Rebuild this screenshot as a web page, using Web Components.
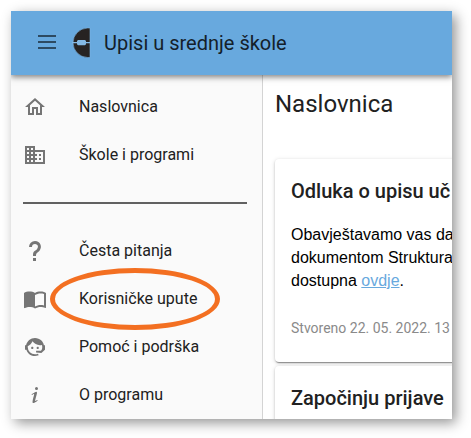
<!DOCTYPE html>
<html lang="hr">
<head>
<meta charset="utf-8">
<meta name="viewport" content="width=device-width, initial-scale=1">
<title>Upisi u srednje škole</title>
<style>
  body {
    margin: 0;
    background: #fff;
    font-family: Roboto, "Liberation Sans", sans-serif;
    color: #212121;
  }
</style>
</head>
<body>
<app-shell>
  <app-toolbar slot="toolbar">Upisi u srednje škole</app-toolbar>
  <side-nav slot="nav">
    <nav-item icon="home">Naslovnica</nav-item>
    <nav-item icon="domain">Škole i programi</nav-item>
    <nav-divider></nav-divider>
    <nav-item icon="help">Česta pitanja</nav-item>
    <nav-item icon="book" marked>Korisničke upute</nav-item>
    <nav-item icon="agent">Pomoć i podrška</nav-item>
    <nav-item icon="info">O programu</nav-item>
  </side-nav>
  <page-heading>Naslovnica</page-heading>
  <news-card>
    <span slot="title">Odluka o upisu uč</span>
    Obavještavamo vas da<br>
    dokumentom Struktura<br>
    dostupna <text-link href="#odluka">ovdje</text-link>.
    <span slot="meta">Stvoreno 22. 05. 2022. 13</span>
  </news-card>
  <news-card>
    <span slot="title">Započinju prijave</span>
  </news-card>
</app-shell>

<script>
const ICONS = {
  menu: "M3 18h18v-2H3v2zm0-6h18v-2H3v2zm0-8v2h18V4H3z",
  home: "M12 5.69L17 10.19V18H15V12H9V18H7V10.19L12 5.69M12 3L2 12H5V20H11V14H13V20H19V12H22L12 3Z",
  domain: "M12 7V3H2v18h20V7H12zM6 19H4v-2h2v2zm0-4H4v-2h2v2zm0-4H4V9h2v2zm0-4H4V5h2v2zm4 12H8v-2h2v2zm0-4H8v-2h2v2zm0-4H8V9h2v2zm0-4H8V5h2v2zm10 12h-8v-2h2v-2h-2v-2h2v-2h-2V9h8v10zm-2-8h-2v2h2v-2zm0 4h-2v2h2v-2z",
  help: "M10,19H13V22H10V19M12,2C17.35,2.22 19.68,7.62 16.5,11.67C15.67,12.67 14.33,13.33 13.67,14.17C13,15 13,16 13,17H10C10,15.33 10,13.92 10.67,12.92C11.33,11.92 12.67,11.33 13.5,10.67C15.92,8.43 15.32,5.26 12,5A3,3 0 0,0 9,8H6A6,6 0 0,1 12,2Z",
  book: "M21 5c-1.11-.35-2.33-.5-3.5-.5-1.95 0-4.05.4-5.5 1.5-1.45-1.1-3.55-1.5-5.5-1.5S2.45 4.9 1 6v14.65c0 .25.25.5.5.5.1 0 .15-.05.25-.05C3.1 20.45 5.05 20 6.5 20c1.95 0 4.05.4 5.5 1.5 1.35-.85 3.8-1.5 5.5-1.5 1.65 0 3.35.3 4.75 1.05.1.05.15.05.25.05.25 0 .5-.25.5-.5V6c-.6-.45-1.25-.75-2-1zm0 13.5c-1.1-.35-2.3-.5-3.5-.5-1.7 0-4.15.65-5.5 1.5V8c1.35-.85 3.8-1.5 5.5-1.5 1.2 0 2.4.15 3.5.5v11.5z",
  agent: "M18.72,14.76C19.07,13.91 19.26,13 19.26,12C19.26,11.28 19.15,10.59 18.96,9.95C18.31,10.1 17.63,10.18 16.92,10.18C13.86,10.18 11.15,8.67 9.5,6.34C8.61,8.5 6.91,10.26 4.77,11.22C4.73,11.47 4.73,11.74 4.73,12A7.27,7.27 0 0,0 12,19.27C13.05,19.27 14.06,19.04 14.97,18.63C15.54,19.72 15.8,20.26 15.78,20.26C14.14,20.81 12.87,21.08 12,21.08C9.58,21.08 7.27,20.13 5.57,18.42C4.53,17.38 3.76,16.11 3.33,14.73H2V10.18H3.09C3.93,6.04 7.6,2.92 12,2.92C14.4,2.92 16.71,3.87 18.42,5.58C19.69,6.84 20.54,8.45 20.89,10.18H22V14.73H21.94L18.38,18L13.08,17.4V15.73H17.91L18.72,14.76M9.27,11.77C9.57,11.77 9.86,11.89 10.07,12.11C10.28,12.32 10.4,12.61 10.4,12.91C10.4,13.21 10.28,13.5 10.07,13.71C9.86,13.92 9.57,14.04 9.27,14.04C8.64,14.04 8.13,13.54 8.13,12.91C8.13,12.28 8.64,11.77 9.27,11.77M14.72,11.77C15.35,11.77 15.85,12.28 15.85,12.91C15.85,13.54 15.35,14.04 14.72,14.04C14.09,14.04 13.58,13.54 13.58,12.91A1.14,1.14 0 0,1 14.72,11.77Z",
  info: "M13.5,4A1.5,1.5 0 0,0 12,5.5A1.5,1.5 0 0,0 13.5,7A1.5,1.5 0 0,0 15,5.5A1.5,1.5 0 0,0 13.5,4M13.14,8.77C11.95,8.87 8.7,11.46 8.7,11.46C8.5,11.61 8.56,11.6 8.72,11.88C8.88,12.15 8.86,12.17 9.05,12.04C9.25,11.91 9.58,11.7 10.13,11.36C12.25,10 10.47,13.14 9.56,18.43C9.2,21.05 11.56,19.7 12.17,19.3C12.77,18.91 14.38,17.8 14.54,17.69C14.76,17.54 14.6,17.42 14.43,17.17C14.31,17 14.19,17.12 14.19,17.12C13.54,17.55 12.35,18.45 12.19,17.88C12,17.31 13.22,13.4 13.89,10.71C14,10.07 14.3,8.67 13.14,8.77Z"
};

class BaseElement extends HTMLElement {
  constructor() {
    super();
    this.attachShadow({ mode: "open" });
  }

  connectedCallback() {
    this.shadowRoot.innerHTML = `<style>${this.constructor.styles}</style>${this.template()}`;
  }
}

class AppShell extends BaseElement {
  static get styles() {
    return /* css */`
      :host {
        display: flex;
        box-sizing: border-box;
        height: 100vh;
        padding: 11px 19px 19px 11px;
        overflow: hidden;
      }

      .window {
        flex: 1;
        min-width: 0;
        display: flex;
        flex-direction: column;
        overflow: hidden;
        background: #fff;
        box-shadow: 4px 4px 12px rgba(0, 0, 0, .42);
      }

      .columns {
        flex: 1;
        min-height: 0;
        display: flex;
      }

      main {
        flex: 1;
        min-width: 0;
        overflow: hidden;
        padding: 13px 0 0 12px;
      }
    `;
  }

  template() {
    return /* html */`
      <div class="window">
        <slot name="toolbar"></slot>
        <div class="columns">
          <slot name="nav"></slot>
          <main><slot></slot></main>
        </div>
      </div>`;
  }
}

class AppIcon extends BaseElement {
  static get styles() {
    return /* css */`
      :host {
        display: block;
        width: 24px;
        height: 24px;
      }

      svg {
        display: block;
        fill: currentColor;
      }
    `;
  }

  template() {
    return /* html */`
      <svg width="24" height="24" viewBox="0 0 24 24" aria-hidden="true">
        <path d="${ICONS[this.getAttribute("name")]}"/>
      </svg>`;
  }
}

class AppToolbar extends BaseElement {
  static get styles() {
    return /* css */`
      :host {
        position: relative;
        z-index: 2;
        flex: none;
        height: 64px;
        padding: 0 24px;
        display: flex;
        align-items: center;
        gap: 13px;
        background: #68a9de;
        box-shadow: 0 2px 6px rgba(0, 0, 0, .5);
      }

      button {
        padding: 0;
        border: 0;
        background: none;
        color: rgba(0, 0, 0, .56);
        cursor: pointer;
      }

      .logo {
        display: block;
        flex: none;
      }

      h1 {
        margin: 0;
        font-size: 20px;
        font-weight: 400;
        line-height: 32px;
        white-space: nowrap;
        color: #14202a;
      }
    `;
  }

  template() {
    return /* html */`
      <button type="button" aria-label="Izbornik"><app-icon name="menu"></app-icon></button>
      <svg class="logo" width="19" height="32" viewBox="0 0 19 32" aria-hidden="true">
        <path d="M18 1v29.500h-2.500A15 14.750 0 0 1 1 15.750 15 14.750 0 0 1 15.500 1z" fill="#262322" stroke="#7db5e3" stroke-width=".6"/>
        <path d="M0 15h5v-1l1-1h7l1 1v1h4v1.200h-4v1l-1 1H6l-1-1v-1H0z" fill="#84b9e4"/>
      </svg>
      <h1><slot></slot></h1>`;
  }
}

class SideNav extends BaseElement {
  static get styles() {
    return /* css */`
      :host {
        display: block;
        flex: none;
        width: 251px;
        padding-top: 8px;
        background: #fafafa;
        border-right: 1px solid #d4d4d4;
      }
    `;
  }

  template() {
    return /* html */`<nav><slot></slot></nav>`;
  }
}

class NavItem extends BaseElement {
  static get styles() {
    return /* css */`
      :host {
        display: block;
        position: relative;
      }

      a {
        display: flex;
        align-items: center;
        gap: 32px;
        height: 48px;
        padding: 0 12px;
        font-size: 16px;
        line-height: 24px;
        white-space: nowrap;
        color: #212121;
        text-decoration: none;
      }

      app-icon {
        color: #757575;
      }

      /* ring around the highlighted entry */
      :host([marked])::after {
        content: "";
        position: absolute;
        z-index: 1;
        inset: -7px 42px -7px 39px;
        border: 5px solid #f36f21;
        border-radius: 50%;
        pointer-events: none;
      }
    `;
  }

  template() {
    return /* html */`
      <a href="#${this.getAttribute("icon")}">
        <app-icon name="${this.getAttribute("icon")}"></app-icon>
        <slot></slot>
      </a>`;
  }
}

class NavDivider extends BaseElement {
  static get styles() {
    return /* css */`
      :host {
        display: flex;
        align-items: center;
        height: 48px;
        padding: 0 15px 0 12px;
      }

      hr {
        flex: 1;
        height: 2px;
        margin: 0;
        border: 0;
        background: #616161;
      }
    `;
  }

  template() {
    return /* html */`<hr>`;
  }
}

class PageHeading extends BaseElement {
  static get styles() {
    return /* css */`
      :host {
        display: block;
        margin-bottom: 39px;
      }

      h2 {
        margin: 0;
        font-size: 24px;
        font-weight: 400;
        line-height: 32px;
      }
    `;
  }

  template() {
    return /* html */`<h2><slot></slot></h2>`;
  }
}

class NewsCard extends BaseElement {
  static get styles() {
    return /* css */`
      :host {
        display: block;
        min-width: 240px;
        box-sizing: border-box;
        margin-bottom: 4px;
        padding: 16px 16px 22px;
        background: #fff;
        border-radius: 4px;
        box-shadow: 0 2px 1px -1px rgba(0, 0, 0, .3), 0 1px 2px rgba(0, 0, 0, .18), 0 1px 5px rgba(0, 0, 0, .14);
        white-space: nowrap;
      }

      h3 {
        margin: 0 0 16px;
        font-size: 20px;
        font-weight: 500;
        line-height: 32px;
      }

      .text {
        margin-bottom: 24px;
        font: 16px/23px "Liberation Sans", Arial, sans-serif;
        color: #000;
      }

      .meta {
        font-size: 14px;
        line-height: 24px;
        color: #8a8a8a;
      }
    `;
  }

  template() {
    return /* html */`
      <h3><slot name="title"></slot></h3>
      <div class="text"><slot></slot></div>
      <div class="meta"><slot name="meta"></slot></div>`;
  }
}

class TextLink extends BaseElement {
  static get styles() {
    return /* css */`
      :host {
        display: inline;
      }

      a {
        color: #68a9de;
        text-decoration: underline;
      }
    `;
  }

  template() {
    return /* html */`<a href="${this.getAttribute("href")}"><slot></slot></a>`;
  }
}

customElements.define("app-icon", AppIcon);
customElements.define("app-shell", AppShell);
customElements.define("app-toolbar", AppToolbar);
customElements.define("side-nav", SideNav);
customElements.define("nav-item", NavItem);
customElements.define("nav-divider", NavDivider);
customElements.define("page-heading", PageHeading);
customElements.define("news-card", NewsCard);
customElements.define("text-link", TextLink);
</script>
</body>
</html>
